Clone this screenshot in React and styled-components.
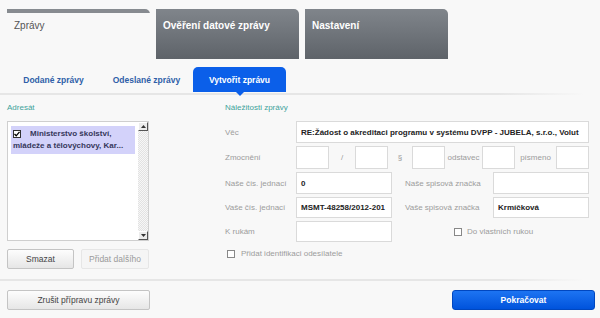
import React from "react";
import styled, { createGlobalStyle } from "styled-components";

const Global = createGlobalStyle`
    body {
        margin: 0;
        background: #f8f8f8;
        font-family: "Liberation Sans", Arial, sans-serif;
    }
`;

const Page = styled.div`
    width: 600px;
    height: 318px;
    overflow: hidden;
    background: #f8f8f8;
`;

const TopTabs = styled.div`
    display: flex;
    gap: 6px;
    padding: 9px 0 0 7px;
`;

const TopTab = styled.div`
    width: 143px;
    height: 50px;
    box-sizing: border-box;
    padding: 11px 8px 0 7px;
    font-size: 10px;
    border-top-right-radius: 5px;
    color: ${p => (p.active ? "#555" : "#fff")};
    font-weight: ${p => (p.active ? "normal" : "bold")};
    background: ${p =>
        p.active
            ? "linear-gradient(#878b90, #878b90) top / 100% 4px no-repeat, #f8f8f8"
            : "linear-gradient(#80858b, #5e6369)"};
`;

const SubTabs = styled.div`
    display: flex;
    margin: 8px 0 0 7px;
    height: 25px;
`;

const SubTab = styled.div`
    position: relative;
    width: 93px;
    display: flex;
    align-items: center;
    justify-content: center;
    font-size: 8.5px;
    font-weight: bold;
    color: ${p => (p.active ? "#fff" : "#2f5fa8")};
    background: ${p => (p.active ? "#0b5fe9" : "transparent")};
    border-radius: 5px 5px 0 0;
    &::after {
        content: "";
        display: ${p => (p.active ? "block" : "none")};
        position: absolute;
        left: 50%;
        bottom: -4px;
        margin-left: -4px;
        border: 4px solid transparent;
        border-bottom: 0;
        border-top-color: #0b5fe9;
    }
`;

const Rule = styled.div`
    height: 2px;
    margin: ${p => p.margin};
    width: 585px;
    background: linear-gradient(90deg, #e6e6e6 85%, rgba(230, 230, 230, 0));
`;

const Main = styled.div`
    display: flex;
    padding: 8px 0 0 7px;
    height: 175px;
`;

const LeftCol = styled.div`
    width: 142px;
    display: flex;
    flex-direction: column;
`;

const SectionTitle = styled.div`
    color: #3ea39b;
    font-size: 8px;
    height: 18px;
    line-height: 10px;
`;

const ListBox = styled.div`
    display: flex;
    height: 120px;
    box-sizing: border-box;
    border: 1px solid #cfcfcf;
    background: #fff;
`;

const ListItems = styled.div`
    flex: 1;
    padding: 4px 3px 0 3px;
`;

const ListItem = styled.div`
    background: #d3d2fa;
    color: #36375a;
    font-size: 8px;
    font-weight: bold;
    line-height: 12px;
    padding: 2px 4px 2px 2px;
`;

const Check = styled.span`
    display: inline-flex;
    align-items: center;
    justify-content: center;
    width: 8px;
    height: 8px;
    box-sizing: border-box;
    border: 1px solid ${p => (p.dark ? "#333" : "#888")};
    background: #fff;
    vertical-align: -1px;
    margin-right: ${p => p.gap || 6}px;
    flex: none;
`;

const ScrollBar = styled.div`
    width: 10px;
    display: flex;
    flex-direction: column;
    justify-content: space-between;
    background-color: #f2f2f2;
    background-image: repeating-conic-gradient(#e2e2e2 0 25%, #f7f7f7 0 50%);
    background-size: 2px 2px;
`;

const ScrollArrow = styled.div`
    height: 9px;
    background: #ececec;
    border: 1px solid #fff;
    border-right-color: #555;
    border-bottom-color: #555;
    box-sizing: border-box;
    display: flex;
    align-items: center;
    justify-content: center;
`;

const ButtonRow = styled.div`
    display: flex;
    gap: 7px;
    margin-top: 8px;
`;

const Button = styled.button`
    width: ${p => p.w}px;
    height: 20px;
    border: 1px solid ${p => (p.disabled ? "#e6e6e6" : "#c4c4c4")};
    border-radius: 2px;
    background: ${p => (p.disabled ? "#f5f5f5" : "linear-gradient(#fdfdfd, #e6e6e6)")};
    color: ${p => (p.disabled ? "#9a9a9a" : "#444")};
    font-family: "Liberation Sans", Arial, sans-serif;
    font-size: 8.5px;
    padding: 0;
`;

const PrimaryButton = styled.button`
    width: 143px;
    height: 20px;
    border: 1px solid #0047c0;
    border-radius: 3px;
    background: linear-gradient(#1d74f2, #0053dc);
    color: #fff;
    font-family: "Liberation Sans", Arial, sans-serif;
    font-size: 8.5px;
    font-weight: bold;
    padding: 0;
`;

const RightCol = styled.div`
    margin-left: 76px;
    width: 364px;
    display: flex;
    flex-direction: column;
`;

const Form = styled.div`
    display: flex;
    flex-direction: column;
    gap: 3px;
`;

const Row = styled.div`
    display: flex;
    align-items: center;
    height: ${p => p.h || 21}px;
`;

const Label = styled.span`
    color: #9c9c9c;
    font-size: 8px;
    width: ${p => p.w || 71}px;
    padding-left: ${p => p.pl || 0}px;
    box-sizing: border-box;
    flex: none;
`;

const Sep = styled.span`
    color: #9c9c9c;
    font-size: 8px;
    width: ${p => p.w}px;
    text-align: center;
    flex: none;
`;

const Input = styled.div`
    width: ${p => p.w}px;
    height: 100%;
    box-sizing: border-box;
    border: 1px solid #dadada;
    background: #fff;
    font-size: 8px;
    font-weight: bold;
    color: #222;
    padding-left: 4px;
    display: flex;
    align-items: center;
    white-space: nowrap;
    overflow: hidden;
    flex: none;
`;

const Option = styled.div`
    display: flex;
    align-items: center;
    color: #9c9c9c;
    font-size: 8px;
    margin-left: ${p => p.ml || 0}px;
`;

const Footer = styled.div`
    display: flex;
    justify-content: space-between;
    padding: 9px 5px 0 7px;
`;

const Tick = () => (
    <svg width="6" height="6" viewBox="0 0 6 6">
        <path d="M0.5 3 L2.2 4.8 L5.5 0.8" fill="none" stroke="#000" strokeWidth="1.3" />
    </svg>
);

const Arrow = ({ up }) => (
    <svg width="5" height="3" viewBox="0 0 5 3">
        <path d={up ? "M0 3 L2.5 0 L5 3 Z" : "M0 0 L2.5 3 L5 0 Z"} fill="#333" />
    </svg>
);

const App = () => (
    <Page>
        <Global />
        <TopTabs>
            <TopTab active>Zprávy</TopTab>
            <TopTab>Ověření datové zprávy</TopTab>
            <TopTab>Nastavení</TopTab>
        </TopTabs>
        <SubTabs>
            <SubTab>Dodané zprávy</SubTab>
            <SubTab>Odeslané zprávy</SubTab>
            <SubTab active>Vytvořit zprávu</SubTab>
        </SubTabs>
        <Rule margin="1px 0 0 0" />
        <Main>
            <LeftCol>
                <SectionTitle>Adresát</SectionTitle>
                <ListBox>
                    <ListItems>
                        <ListItem>
                            <Check dark gap={9}><Tick /></Check>
                            Ministerstvo školství, mládeže a tělovýchovy, Kar...
                        </ListItem>
                    </ListItems>
                    <ScrollBar>
                        <ScrollArrow><Arrow up /></ScrollArrow>
                        <ScrollArrow><Arrow /></ScrollArrow>
                    </ScrollBar>
                </ListBox>
                <ButtonRow>
                    <Button w={67}>Smazat</Button>
                    <Button w={68} disabled>Přidat dalšího</Button>
                </ButtonRow>
            </LeftCol>
            <RightCol>
                <SectionTitle>Náležitosti zprávy</SectionTitle>
                <Form>
                    <Row h={22}>
                        <Label>Věc</Label>
                        <Input w={293}>RE:Žádost o akreditaci programu v systému DVPP - JUBELA, s.r.o., Volut</Input>
                    </Row>
                    <Row h={23}>
                        <Label>Zmocnění</Label>
                        <Input w={33} />
                        <Sep w={26}>/</Sep>
                        <Input w={33} />
                        <Sep w={24}>§</Sep>
                        <Input w={33} />
                        <Sep w={37}>odstavec</Sep>
                        <Input w={33} />
                        <Sep w={41}>písmeno</Sep>
                        <Input w={33} />
                    </Row>
                    <Row h={22}>
                        <Label>Naše čís. jednací</Label>
                        <Input w={96}>0</Input>
                        <Label w={101} pl={13}>Naše spisová značka</Label>
                        <Input w={96} />
                    </Row>
                    <Row>
                        <Label>Vaše čís. jednací</Label>
                        <Input w={96}>MSMT-48258/2012-201</Input>
                        <Label w={101} pl={13}>Vaše spisová značka</Label>
                        <Input w={96}>Krmíčková</Input>
                    </Row>
                    <Row>
                        <Label>K rukám</Label>
                        <Input w={96} />
                        <Option ml={62}>
                            <Check gap={5} />
                            Do vlastních rukou
                        </Option>
                    </Row>
                    <Row h={17}>
                        <Option ml={2}>
                            <Check gap={6} />
                            Přidat identifikaci odesílatele
                        </Option>
                    </Row>
                </Form>
            </RightCol>
        </Main>
        <Rule margin="1px 0 0 0" />
        <Footer>
            <Button w={143}>Zrušit přípravu zprávy</Button>
            <PrimaryButton>Pokračovat</PrimaryButton>
        </Footer>
    </Page>
);

export default App;
